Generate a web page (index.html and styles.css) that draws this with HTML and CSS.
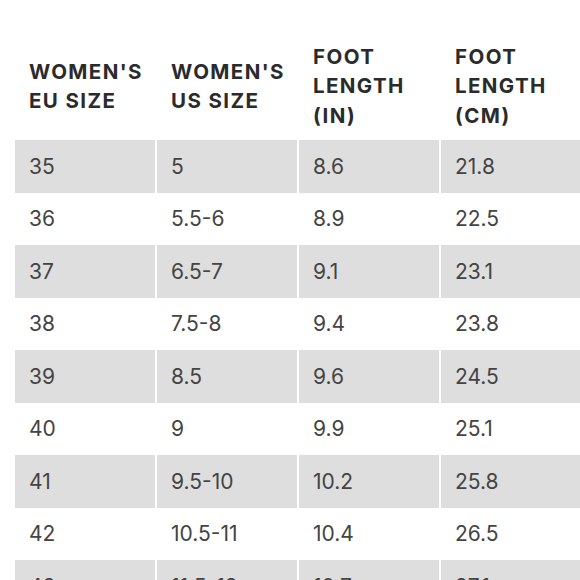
FILE: index.html
```html
<!DOCTYPE html>
<html>
<head>
<meta charset="utf-8">
<link rel="stylesheet" href="styles.css">
</head>
<body>
<div class="wrap">
<table class="sizes">
<thead>
<tr><th>WOMEN'S<br>EU SIZE</th><th>WOMEN'S<br>US SIZE</th><th>FOOT<br>LENGTH<br>(IN)</th><th>FOOT<br>LENGTH<br>(CM)</th></tr>
</thead>
<tbody>
<tr><td>35</td><td>5</td><td>8.6</td><td>21.8</td></tr>
<tr><td>36</td><td>5.5-6</td><td>8.9</td><td>22.5</td></tr>
<tr><td>37</td><td>6.5-7</td><td>9.1</td><td>23.1</td></tr>
<tr><td>38</td><td>7.5-8</td><td>9.4</td><td>23.8</td></tr>
<tr><td>39</td><td>8.5</td><td>9.6</td><td>24.5</td></tr>
<tr><td>40</td><td>9</td><td>9.9</td><td>25.1</td></tr>
<tr><td>41</td><td>9.5-10</td><td>10.2</td><td>25.8</td></tr>
<tr><td>42</td><td>10.5-11</td><td>10.4</td><td>26.5</td></tr>
<tr><td>43</td><td>11.5-12</td><td>10.7</td><td>27.1</td></tr>
</tbody>
</table>
</div>
</body>
</html>
```
FILE: styles.css
```css
html, body {
  margin: 0;
  padding: 0;
  background: #ffffff;
  overflow: hidden;
}
.wrap {
  padding-left: 13px;
}
.sizes {
  border-collapse: separate;
  border-spacing: 2px 0;
  font-family: "Inter", "Open Sans", sans-serif;
  table-layout: fixed;
  width: 569px;
}
.sizes th, .sizes td {
  width: 140px;
  padding: 0 0 0 14px;
  text-align: left;
  box-sizing: border-box;
}
.sizes th:last-child, .sizes td:last-child {
  width: 139px;
}
.sizes th {
  height: 140px;
  vertical-align: middle;
  font-size: 20.5px;
  letter-spacing: 1.4px;
  line-height: 29.5px;
  font-weight: 700;
  color: #2b2b2b;
  padding-top: 32px;
}
.sizes td {
  height: 52.5px;
  font-size: 21px;
  font-weight: 400;
  color: #444444;
  vertical-align: middle;
}
.sizes tbody tr:nth-child(odd) td {
  background: #dedede;
}
```
